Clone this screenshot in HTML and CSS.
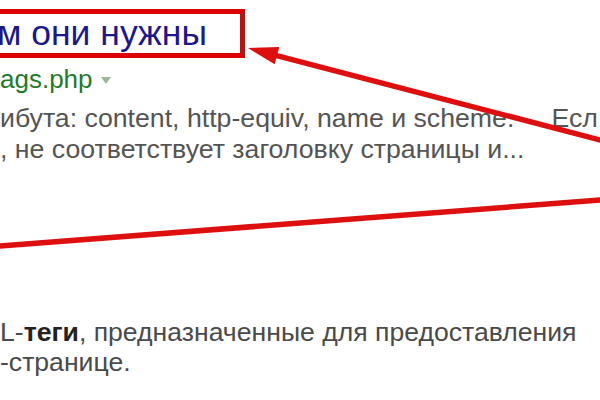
FILE: index.html
```html
<!DOCTYPE html>
<html lang="ru">
<head>
<meta charset="utf-8">
<link rel="stylesheet" href="styles.css">
</head>
<body>
<div class="page">
  <div class="result">
    <h3 class="title-box"><a class="title">м они нужны</a></h3>
    <div class="url">ags.php <span class="caret"></span></div>
    <p class="snippet">ибута: content, http-equiv, name и scheme.&nbsp;&nbsp;&nbsp;&nbsp; Есл<br>, не соответствует заголовку страницы и...</p>
  </div>
  <p class="desc">L-<b>теги</b>, предназначенные для предоставления<br>-странице.</p>
  <svg class="marks" width="600" height="400" viewBox="0 0 600 400">
    <line x1="605" y1="141.3" x2="270" y2="53.8" stroke="#dd0f0f" stroke-width="5.5"/>
    <polygon points="248,48 279.3,46.9 274.7,64.3" fill="#dd0f0f"/>
    <line x1="-5" y1="246.4" x2="605" y2="199.6" stroke="#dd0f0f" stroke-width="5.5"/>
  </svg>
</div>
</body>
</html>
```

FILE: styles.css
```css
html, body {
  margin: 0;
  padding: 0;
  background: #fff;
}
body {
  width: 600px;
  height: 400px;
  overflow: hidden;
  font-family: "Liberation Sans", Arial, sans-serif;
}
.page {
  position: relative;
  width: 600px;
  height: 400px;
  padding-top: 9px;
  box-sizing: border-box;
  overflow: hidden;
}
.result {
  display: flex;
  flex-direction: column;
  align-items: flex-start;
}
.title-box {
  margin: 0;
  font-weight: normal;
  border: 5px solid #dc0000;
  border-left: none;
  border-right-color: #b01818;
  padding: 0 33px 0 0;
  height: 39px;
  line-height: 39px;
  box-sizing: content-box;
}
.title {
  font-size: 35.5px;
  color: #1c1888;
  margin-left: -3px;
}
.url {
  margin-top: 6px;
  font-size: 26px;
  line-height: 30px;
  color: #1f7a2a;
  display: flex;
  align-items: center;
}
.caret {
  display: inline-block;
  width: 0;
  height: 0;
  border-left: 5px solid transparent;
  border-right: 5px solid transparent;
  border-top: 7px solid #98b898;
  margin-left: 8px;
  margin-top: 3px;
}
.snippet {
  margin: 9px 0 0 0;
  font-size: 26.7px;
  line-height: 31px;
  color: #545454;
  white-space: nowrap;
}
.desc {
  margin: 152px 0 0 0;
  font-size: 26.6px;
  line-height: 30px;
  color: #4a4a4a;
  white-space: nowrap;
}
.desc b {
  color: #222;
}
.marks {
  position: absolute;
  left: 0;
  top: 0;
  pointer-events: none;
}
```
